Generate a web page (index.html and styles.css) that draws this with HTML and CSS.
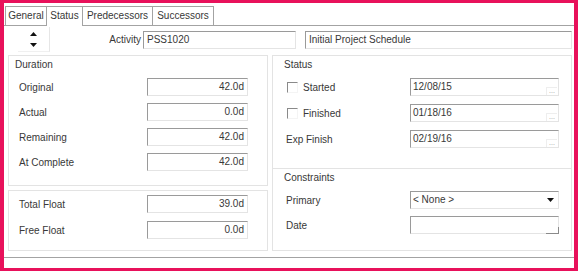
FILE: index.html
```html
<!DOCTYPE html>
<html lang="en">
<head>
  <meta charset="UTF-8" />
  <title>Activity Status</title>
  <link rel="stylesheet" href="styles.css">
</head>
<body>
  <div class="frame">
    <div class="window">

      <div class="tabs">
        <div class="tab tab-general">General</div>
        <div class="tab tab-status active">Status</div>
        <div class="tab tab-pred">Predecessors</div>
        <div class="tab tab-succ">Successors</div>
      </div>

      <div class="head">
        <div class="spinner">
          <svg width="7" height="4" viewBox="0 0 7 4"><polygon points="3.5,0 7,4 0,4" fill="#111"/></svg>
          <svg width="7" height="4" viewBox="0 0 7 4"><polygon points="0,0 7,0 3.5,4" fill="#111"/></svg>
        </div>
        <div class="act-label">Activity</div>
        <div class="box field-id">PSS1020</div>
        <div class="box field-desc">Initial Project Schedule</div>
      </div>

      <div class="content">
        <div class="col-left">
          <div class="panel duration">
            <div class="panel-title">Duration</div>
            <div class="rows">
              <div class="row"><span class="lbl">Original</span><div class="box num">42.0d</div></div>
              <div class="row"><span class="lbl">Actual</span><div class="box num">0.0d</div></div>
              <div class="row"><span class="lbl">Remaining</span><div class="box num">42.0d</div></div>
              <div class="row"><span class="lbl">At Complete</span><div class="box num">42.0d</div></div>
            </div>
          </div>
          <div class="panel float">
            <div class="rows">
              <div class="row"><span class="lbl">Total Float</span><div class="box num">39.0d</div></div>
              <div class="row"><span class="lbl">Free Float</span><div class="box num">0.0d</div></div>
            </div>
          </div>
        </div>

        <div class="col-right">
          <div class="section status">
            <div class="panel-title">Status</div>
            <div class="rows">
              <div class="row">
                <span class="lbl"><span class="check"></span>Started</span>
                <div class="box date">12/08/15<span class="dots">...</span></div>
              </div>
              <div class="row">
                <span class="lbl"><span class="check"></span>Finished</span>
                <div class="box date">01/18/16<span class="dots">...</span></div>
              </div>
              <div class="row">
                <span class="lbl">Exp Finish</span>
                <div class="box date">02/19/16<span class="dots">...</span></div>
              </div>
            </div>
          </div>
          <div class="section constraints">
            <div class="panel-title">Constraints</div>
            <div class="rows">
              <div class="row">
                <span class="lbl">Primary</span>
                <div class="box date">&lt; None &gt;
                  <svg class="arrow" width="7" height="4" viewBox="0 0 7 4"><polygon points="0,0 7,0 3.5,4" fill="#111"/></svg>
                </div>
              </div>
              <div class="row">
                <span class="lbl">Date</span>
                <div class="box date"><span class="corner"></span></div>
              </div>
            </div>
          </div>
        </div>
      </div>

      <div class="footer"></div>
    </div>
  </div>
</body>
</html>
```

FILE: styles.css
```css
:root {
  --pink: #e8115b;
  --line: #a3a3a3;
  --panel-line: #e3e3e3;
  --text: #383838;
}

body {
  margin: 0;
  background: var(--pink);
  font-family: "Liberation Sans", Arial, sans-serif;
  font-size: 10px;
  color: var(--text);
}

.frame {
  width: 578px;
  height: 271px;
  padding: 3px 4px;
  box-sizing: border-box;
}

.window {
  width: 570px;
  height: 265px;
  background: #fff;
  display: flex;
  flex-direction: column;
}

/* tab strip */
.tabs {
  display: flex;
  align-items: flex-end;
  height: 23px;
  padding: 3px 0 0 1px;
  box-sizing: border-box;
  border-bottom: 1px solid var(--line);
}

.tab {
  height: 19px;
  box-sizing: border-box;
  border: 1px solid var(--line);
  border-bottom: none;
  line-height: 17px;
  text-align: center;
  background: #fff;
  margin-left: -1px;
}

.tab:first-child {
  margin-left: 0;
}

.tab.active {
  height: 20px;
  margin-bottom: -1px;
  position: relative;
}

.tab-general { width: 42px; }
.tab-status { width: 37px; }
.tab-pred { width: 71px; }
.tab-succ { width: 62px; }

/* header row */
.head {
  display: flex;
  align-items: center;
  height: 27px;
}

.spinner {
  margin-left: 14px;
  width: 32px;
  height: 25px;
  box-sizing: border-box;
  border-right: 1px solid #e6e6e6;
  border-bottom: 1px solid #f0f0f0;
  display: flex;
  flex-direction: column;
  align-items: center;
  justify-content: center;
  gap: 7px;
}

.act-label {
  width: 93px;
  padding-right: 2px;
  box-sizing: border-box;
  text-align: right;
}

.box {
  height: 18px;
  box-sizing: border-box;
  border-top: 1px solid #9a9a9a;
  border-left: 1px solid #9a9a9a;
  border-right: 1px solid #e4e4e4;
  border-bottom: 1px solid #e4e4e4;
  line-height: 16px;
  padding: 0 3px;
  white-space: nowrap;
  position: relative;
}

.field-id {
  width: 153px;
}

.field-desc {
  flex: 1;
  margin-left: 9px;
  margin-right: 2px;
}

/* panels */
.content {
  display: flex;
  gap: 4px;
  padding: 2px 2px 0 4px;
}

.col-left {
  width: 260px;
  display: flex;
  flex-direction: column;
  gap: 4px;
}

.col-right {
  width: 300px;
  border: 1px solid var(--panel-line);
  box-sizing: border-box;
}

.panel {
  border: 1px solid var(--panel-line);
  box-sizing: border-box;
}

.duration { height: 131px; }
.float { height: 61px; }
.status { height: 112px; }
.constraints {
  height: 82px;
  border-top: 1px solid var(--panel-line);
  box-sizing: border-box;
}

.panel-title {
  height: 19px;
  line-height: 18px;
  padding-left: 6px;
}

.col-right .panel-title {
  padding-left: 11px;
}

.rows {
  display: flex;
  flex-direction: column;
  gap: 7px;
  padding-top: 3px;
}

.float .rows {
  padding-top: 4px;
  gap: 8px;
}

.col-right .rows {
  gap: 8px;
}

.constraints .rows {
  padding-top: 3px;
  gap: 7px;
}

.row {
  display: flex;
  align-items: center;
  height: 18px;
}

.lbl {
  width: 138px;
  padding-left: 10px;
  box-sizing: border-box;
  display: flex;
  align-items: center;
}

.col-right .lbl {
  width: 137px;
  padding-left: 13px;
}

.num {
  width: 101px;
  text-align: right;
}

.date {
  width: 149px;
  padding-left: 2px;
}

.check {
  width: 11px;
  height: 11px;
  box-sizing: border-box;
  border-top: 1px solid #8a8a8a;
  border-left: 1px solid #8a8a8a;
  border-right: 1px solid #f4f4f4;
  border-bottom: 1px solid #f4f4f4;
  margin-left: 1px;
  margin-right: 5px;
}

.dots {
  position: absolute;
  right: 1px;
  bottom: 0;
  width: 10px;
  height: 7px;
  font-size: 7px;
  line-height: 5px;
  color: #9a9a9a;
  text-align: center;
  border-top: 1px solid #eee;
  border-left: 1px solid #eee;
}

.corner {
  position: absolute;
  right: -1px;
  bottom: -1px;
  width: 12px;
  height: 6px;
  border-right: 1px solid #8a8a8a;
  border-bottom: 1px solid #8a8a8a;
}

.arrow {
  position: absolute;
  right: 4px;
  top: 6px;
}

.footer {
  margin-top: 6px;
  border-top: 1px solid var(--line);
}
```
